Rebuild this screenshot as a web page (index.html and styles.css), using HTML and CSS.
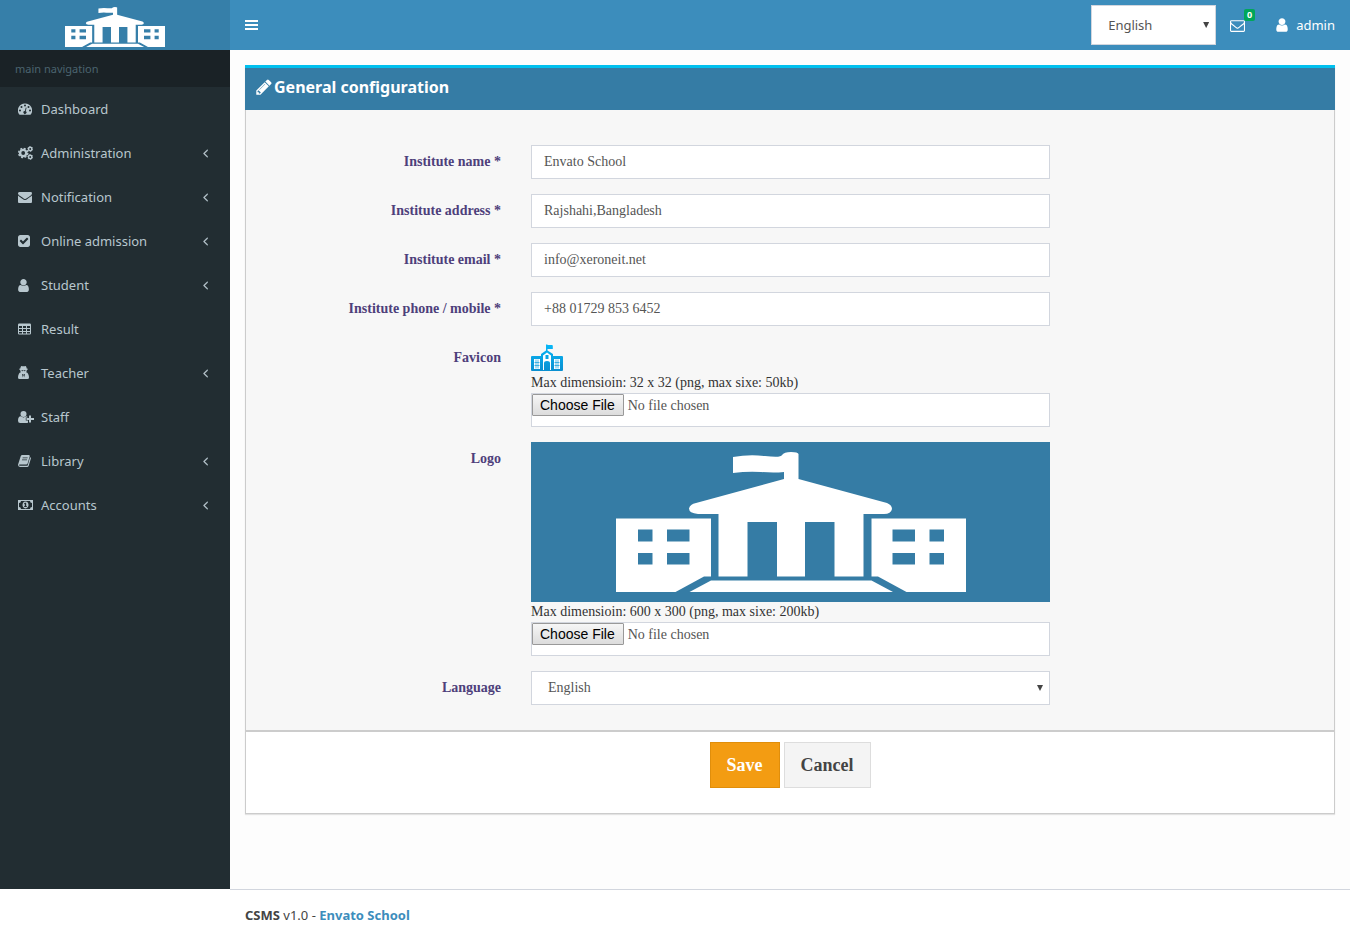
FILE: index.html
```html
<!DOCTYPE html>
<html lang="en">
<head>
<meta charset="utf-8">
<title>General configuration</title>
<link rel="stylesheet" href="styles.css">
</head>
<body>
<svg class="defs" aria-hidden="true">
  <symbol id="school" viewBox="0 0 350 140">
    <path fill-rule="evenodd" d="M117 5Q133 2 149 4T166 3Q168 0 175 0Q182 0 182.500 2V27L271 51Q276 53 276 57Q275 62 268 62H247.500V124.500H218.500V70H189V124.500H161V70H131.500V124.500H102.500V62H82Q73 61 73 56.500Q74 52 80 51L168 27V20Q158 21 145 20T117 21Z"/>
    <path fill-rule="evenodd" d="M0 66.500H95V124.500H88L59.500 140H0ZM22 77.500V89.500H36.500V77.500ZM51 77.500V89.500H73.500V77.500ZM22 101V112.500H36.500V101ZM51 101V112.500H73.500V101ZM350 66.500H255.500V124.500H262L290.500 140H350ZM276.500 77.500V89.500H299V77.500ZM313.500 77.500V89.500H328V77.500ZM276.500 101V112.500H299V101ZM313.500 101V112.500H328V101ZM73.500 140L95 128.500H255.500L277 140Z"/>
  </symbol>
  <symbol id="user" viewBox="256 0 1280 1792"><path d="M1536 1399q0 109-62.500 187t-150.500 78h-854q-88 0-150.500-78t-62.500-187q0-85 8.500-160.500t31.500-152 58.500-131 94-89 134.500-34.500q131 128 313 128t313-128q76 0 134.500 34.500t94 89 58.500 131 31.500 152 8.500 160.500zm-256-887q0 159-112.500 271.500t-271.500 112.500-271.500-112.500-112.500-271.500 112.500-271.500 271.500-112.500 271.500 112.500 112.500 271.500z"/></symbol>
  <symbol id="angle" viewBox="576 384 640 1152"><path stroke="currentColor" stroke-width="40" d="M1203 544q0 13-10 23l-393 393 393 393q10 10 10 23t-10 23l-50 50q-10 10-23 10t-23-10l-466-466q-10-10-10-23t10-23l466-466q10-10 23-10t23 10l50 50q10 10 10 23z"/></symbol>
</svg>

<div class="page">
  <a class="brand" href="#" aria-label="Home"><svg class="brand-logo"><use href="#school"/></svg></a>

  <header class="topbar">
    <button class="toggle" type="button" aria-label="Toggle navigation">
      <svg width="13" height="12" viewBox="0 0 13 12"><path d="M0 1h13v2H0zM0 5h13v2H0zM0 9h13v2H0z"/></svg>
    </button>
    <div class="tools">
      <span class="select select-top">
        <select aria-label="Site language"><option>English</option></select>
      </span>
      <a class="mail" href="#" aria-label="Messages">
        <svg width="15" height="15" viewBox="0 0 1792 1792"><path d="M1664 1504v-768q-32 36-69 66-268 206-426 338-51 43-83 67t-86.500 48.500-102.500 24.500h-2q-48 0-102.500-24.500t-86.500-48.500-83-67q-158-132-426-338-37-30-69-66v768q0 13 9.500 22.500t22.500 9.500h1472q13 0 22.500-9.500t9.500-22.500zm0-1051v-24.500l-.5-13-3-12.500-5.500-9-9-7.500-14-2.500h-1472q-13 0-22.500 9.500t-9.500 22.500q0 168 147 284 193 152 401 317 6 5 35 29.500t46 37.500 44.500 31.500 50.500 27.500 43 9h2q20 0 43-9t50.500-27.500 44.500-31.500 46-37.500 35-29.500q208-165 401-317 54-43 100.500-115.500t46.500-131.500zm128-37v1088q0 66-47 113t-113 47h-1472q-66 0-113-47t-47-113v-1088q0-66 47-113t113-47h1472q66 0 113 47t47 113z"/></svg>
        <span class="badge">0</span>
      </a>
      <a class="account" href="#"><svg width="12" height="16"><use href="#user"/></svg>admin</a>
    </div>
  </header>

  <nav class="sidebar" aria-label="Main">
    <h2 class="nav-title">main navigation</h2>
    <ul class="menu">
      <li><a href="#"><span class="icon"><svg width="14" height="14" viewBox="0 0 14 14"><path fill-rule="evenodd" d="M7 1.500a7 7 0 0 1 6 10.800q-.3.400-.8.400H1.800q-.5 0-.8-.4A7 7 0 0 1 7 1.500zM2 7.500a1 1 0 1 0 0 2 1 1 0 0 0 0-2zM3.500 4a1 1 0 1 0 0 2 1 1 0 0 0 0-2zM7 2.500a1 1 0 1 0 0 2 1 1 0 0 0 0-2zM10.500 4a1 1 0 1 0 0 2 1 1 0 0 0 0-2zM12 7.500a1 1 0 1 0 0 2 1 1 0 0 0 0-2zM7.800 5.600L6.800 9a1.500 1.500 0 1 0 .9.200l.9-3.400z"/></svg></span>Dashboard</a></li>
      <li><a href="#"><span class="icon"><svg width="15" height="14" viewBox="0 0 15 14"><circle class="line" cx="5.200" cy="7" r="3.100" stroke-width="2.400"/><circle class="line" cx="5.200" cy="7" r="4.600" stroke-width="1.400" stroke-dasharray="2 1.613"/><circle class="line" cx="12.200" cy="3" r="1.700" stroke-width="1.500"/><circle class="line" cx="12.200" cy="3" r="2.500" stroke-width=".8" stroke-dasharray="1.400 1.218"/><circle class="line" cx="12.200" cy="11" r="1.700" stroke-width="1.500"/><circle class="line" cx="12.200" cy="11" r="2.500" stroke-width=".8" stroke-dasharray="1.400 1.218"/></svg></span>Administration<svg class="angle"><use href="#angle"/></svg></a></li>
      <li><a href="#"><span class="icon"><svg width="14" height="14" viewBox="0 0 1792 1792"><path d="M1792 710v794q0 66-47 113t-113 47h-1472q-66 0-113-47t-47-113v-794q44 49 101 87 362 246 497 345 57 42 92.500 65.500t94.500 48 110 24.500h2q51 0 110-24.500t94.500-48 92.500-65.500q170-123 498-345 57-39 100-87zm0-294q0 79-49 151t-122 123q-376 261-468 325-10 7-42.500 31t-54 38.500-52 32.500-57.500 27-50 9h-2q-23 0-50-9t-57.500-27-52-32.500-54-38.500-42.500-31q-91-64-262-182.500t-205-142.500q-62-42-117-115.500t-55-136.500q0-78 41.500-130t118.500-52h1472q65 0 112.500 47t47.500 113z"/></svg></span>Notification<svg class="angle"><use href="#angle"/></svg></a></li>
      <li><a href="#"><span class="icon"><svg width="12" height="14" viewBox="128 0 1536 1792"><path d="M813 1299l614-614q19-19 19-45t-19-45l-102-102q-19-19-45-19t-45 19l-467 467-211-211q-19-19-45-19t-45 19l-102 102q-19 19-19 45t19 45l358 358q19 19 45 19t45-19zm851-883v960q0 119-84.500 203.500t-203.500 84.500h-960q-119 0-203.500-84.500t-84.500-203.500v-960q0-119 84.500-203.500t203.500-84.500h960q119 0 203.500 84.500t84.500 203.500z"/></svg></span>Online admission<svg class="angle"><use href="#angle"/></svg></a></li>
      <li><a href="#"><span class="icon"><svg width="11" height="15"><use href="#user"/></svg></span>Student<svg class="angle"><use href="#angle"/></svg></a></li>
      <li><a href="#"><span class="icon"><svg width="13" height="14" viewBox="0 0 13 14"><path fill-rule="evenodd" d="M1.200 1.500h10.600q1.200 0 1.200 1.200v8.600q0 1.200-1.200 1.200H1.200Q0 12.500 0 11.300V2.700Q0 1.500 1.200 1.500zM1 4v2h3V4zM5 4v2h3V4zM9 4v2h3V4zM1 7v2h3V7zM5 7v2h3V7zM9 7v2h3V7zM1 10v1.500h3V10zM5 10v1.500h3V10zM9 10v1.500h3V10z"/></svg></span>Result</a></li>
      <li><a href="#"><span class="icon"><svg width="11" height="14" viewBox="0 0 11 14"><path fill-rule="evenodd" d="M3.300 0q.6 0 1.100.3h2.200q.5-.3 1.100-.3.800.6 1 2.400 1.300.3 1.300.7 0 .5-1.200.8 0 1.500-.7 2.300 1.500.3 2.100 1.800.8 1.500.8 3.500Q11 13 9.500 13h-8Q0 13 0 11.500 0 9.500.8 8q.6-1.500 2.100-1.800-.7-.8-.7-2.300Q1 3.600 1 3.100q0-.4 1.300-.7Q2.500.6 3.300 0zM3.400 4.200q.1 1 .9 1t1-.6h.4q.2.600 1 .6t.9-1q-2.100.2-4.200 0zM4 7.900l.9 3.700.5-2.800-.4-.6zM7 7.900l-1 .3-.4.600.5 2.800z"/></svg></span>Teacher<svg class="angle"><use href="#angle"/></svg></a></li>
      <li><a href="#"><span class="icon"><svg width="16" height="14" viewBox="0 0 16 14"><circle cx="5.500" cy="4" r="3"/><path d="M2.800 6.300q2.700 2.200 5.400 0 .7 0 1.300.4V7.500H7.800v3H10v2q-.5.500-1.200.5H2.200Q0 13 0 10.700 0 6.500 2.800 6.300zM11 5.500h2V8h3v2h-3v2.500h-2V10H8.500V8H11z"/></svg></span>Staff</a></li>
      <li><a href="#"><span class="icon"><svg width="13" height="14" viewBox="0 0 13 14"><path fill-rule="evenodd" d="M4.200 1h6.600q1.200.2.900 1.400L9.500 9.700Q9.200 10.500 8.300 10.500H1.500q-.6.200-.3.700.2.500.8.500h7q.5 0 .7-.5l2.400-7.900q1 .3.800 1.200l-2.200 7.300q-.4 1.200-1.500 1.200H2Q0 12.700 0 10.800L2.700 2.200Q3.200 1 4.200 1zM4.700 3.500l-.2.800h5l.2-.8zM4.100 5.500l-.2.800h5l.2-.8z"/></svg></span>Library<svg class="angle"><use href="#angle"/></svg></a></li>
      <li><a href="#"><span class="icon"><svg width="15" height="14" viewBox="0 0 15 14"><path fill-rule="evenodd" d="M0 2h15v10H0zM3 3Q3 5 1 5v4q2 0 2 2h9q0-2 2-2V5q-2 0-2-2z"/><path fill-rule="evenodd" d="M7.500 3.600c4 0 4 6.800 0 6.800s-4-6.800 0-6.800zM7 4.800L5.900 5.700l.5.600.4-.3v2.200H6v.8h3v-.8h-.8V4.800z"/></svg></span>Accounts<svg class="angle"><use href="#angle"/></svg></a></li>
    </ul>
  </nav>

  <main class="content">
    <form class="box">
      <h1 class="box-title"><svg width="16" height="18" viewBox="128 0 1536 1792"><path d="M491 1536l91-91-235-235-91 91v107h128v128h107zm523-928q0-22-22-22-10 0-17 7l-542 542q-7 7-7 17 0 22 22 22 10 0 17-7l542-542q7-7 7-17zm-54-192l416 416-832 832h-416v-416zm683 96q0 53-37 90l-166 166-416-416 166-165q36-38 90-38 53 0 91 38l235 234q37 39 37 91z"/></svg>General configuration</h1>
      <div class="box-body">
        <div class="row"><label for="name">Institute name *</label><input class="field" id="name" type="text" value="Envato School"></div>
        <div class="row"><label for="address">Institute address *</label><input class="field" id="address" type="text" value="Rajshahi,Bangladesh"></div>
        <div class="row"><label for="email">Institute email *</label><input class="field" id="email" type="email" value="info@xeroneit.net"></div>
        <div class="row"><label for="phone">Institute phone / mobile *</label><input class="field" id="phone" type="tel" value="+88 01729 853 6452"></div>
        <div class="row"><label for="favicon">Favicon</label>
          <div>
            <svg class="favicon" viewBox="0 0 32 32" aria-hidden="true">
              <defs><linearGradient id="sky" x2="0" y2="1"><stop offset="0" stop-color="#08b8f8"/><stop offset="1" stop-color="#0a8fd0"/></linearGradient></defs>
              <path fill="url(#sky)" d="M15 3.500h1.500V4H21q.8 0 .8 1v3h-5.300v1.500L22 13v2h9q1 0 1 1v13q0 1-1 1H1q-1 0-1-1V16q0-1 1-1h9v-2l5-3.500z"/>
              <path fill="#fff" d="M12 14.500l4-3 4 3V29h-1v-7q0-2-3-2t-3 2v7h-1z"/>
              <path fill="#0aa5e6" d="M14.500 14h3v4h-3z"/>
              <path fill="#fff" d="M3 18h6v10H3zM23 18h6v10h-6z"/>
              <path fill="none" stroke="#0a9bdb" stroke-width=".7" d="M5 18.500v9M7 18.500v9M3.500 21.500h5M3.500 24.500h5M25 18.500v9M27 18.500v9M23.500 21.500h5M23.500 24.500h5"/>
            </svg>
            <p class="hint">Max dimensioin: 32 x 32 (png, max sixe: 50kb)</p>
            <input class="field file" id="favicon" type="file">
          </div>
        </div>
        <div class="row"><label for="logo">Logo</label>
          <div>
            <div class="logo-preview"><svg><use href="#school"/></svg></div>
            <p class="hint">Max dimensioin: 600 x 300 (png, max sixe: 200kb)</p>
            <input class="field file" id="logo" type="file">
          </div>
        </div>
        <div class="row"><label for="language">Language</label>
          <span class="select"><select id="language"><option>English</option></select></span>
        </div>
      </div>
      <div class="box-footer">
        <button class="btn save" type="submit">Save</button>
        <button class="btn cancel" type="button">Cancel</button>
      </div>
    </form>
  </main>

  <footer class="footer"><p><strong>CSMS</strong> v1.0 - <a href="#">Envato School</a></p></footer>
</div>
</body>
</html>
```

FILE: styles.css
```css
* { box-sizing: border-box; }
body {
  margin: 0;
  background: #fff;
  color: #333;
  font-family: "Noto Sans", "Open Sans", sans-serif;
  font-size: 13px;
  line-height: 20px;
}
h1, h2, p, ul { margin: 0; padding: 0; }
a { color: #3c8dbc; text-decoration: none; }
svg { display: block; fill: currentColor; flex: none; }
.defs { position: absolute; width: 0; height: 0; }

.page {
  display: grid;
  grid-template-columns: 230px 1fr;
  grid-template-rows: 50px 1fr auto;
  min-height: 100vh;
}

.brand {
  display: flex;
  justify-content: center;
  align-items: flex-end;
  padding-bottom: 3px;
  background: #367fa9;
  color: #fff;
}
.brand-logo { width: 100px; height: 40px; }

.topbar {
  display: flex;
  justify-content: space-between;
  align-items: center;
  padding-right: 15px;
  background: #3c8dbc;
  color: #fff;
}
.toggle {
  padding: 15px;
  border: 0;
  background: none;
  color: inherit;
}
.tools { display: flex; align-items: center; }
.mail { position: relative; margin-left: 14px; color: #fff; }
.badge {
  position: absolute;
  top: -9px;
  left: 14px;
  width: 11px;
  border-radius: 2px;
  background: #00a65a;
  font-size: 9px;
  font-weight: 700;
  line-height: 12px;
  text-align: center;
}
.account {
  display: flex;
  align-items: center;
  gap: 8px;
  margin-left: 31px;
  color: #fff;
}

.sidebar { background: #222d32; }
.nav-title {
  padding: 9px 15px;
  background: #1a2226;
  color: #4b646f;
  font-size: 11px;
  font-weight: 400;
  line-height: 19px;
}
.menu { list-style: none; }
.menu a {
  display: flex;
  align-items: center;
  padding: 12px 22px 12px 18px;
  color: #b8c7ce;
}
.icon { width: 23px; }
.line { fill: none; stroke: currentColor; }
.angle { width: 5px; height: 9px; margin-left: auto; }

.content { padding: 15px; background: #fdfdfd; }
.box {
  border: 1px solid #ccc;
  border-top: 0;
  background: #fff;
  box-shadow: 0 1px 1px rgba(0, 0, 0, .1);
  font-family: "Liberation Serif", serif;
  font-size: 14px;
}
.box-title {
  display: flex;
  align-items: center;
  gap: 2px;
  margin: 0 -1px;
  padding: 9px 11px 13px;
  border-top: 3px solid #00c0ef;
  background: #357ca5;
  color: #fff;
  font-family: "Noto Sans", "Open Sans", sans-serif;
  font-size: 16px;
  font-weight: 700;
}
.box-body {
  display: grid;
  gap: 15px;
  padding: 35px 10px 25px;
  background: #f7f7f7;
}
.row {
  display: grid;
  grid-template-columns: calc(25% - 22px) calc(50% - 15px);
  column-gap: 30px;
}
.row label {
  padding-top: 7px;
  color: #4e3f7b;
  font-weight: 700;
  text-align: right;
}
.field, select {
  display: block;
  width: 100%;
  height: 34px;
  border: 1px solid #d2d6de;
  border-radius: 0;
  background: #fff;
  color: #555;
  font: inherit;
}
.field { padding: 6px 12px; }
.file { padding: 0; }
.file::file-selector-button {
  height: 22px;
  margin: 0 4px 0 0;
  padding: 0 8px 0 7px;
  border: 1px solid #999;
  border-radius: 1px;
  background: linear-gradient(#f6f6f6, #dcdcdc);
  color: #000;
  font: 14px "Liberation Sans", sans-serif;
}
.select { position: relative; display: block; }
.select select { padding: 0 16px; appearance: none; }
.select::after {
  content: "";
  position: absolute;
  top: 50%;
  right: 7px;
  width: 6px;
  height: 6px;
  margin-top: -3px;
  background: #444;
  clip-path: polygon(0 0, 100% 0, 50% 100%);
  pointer-events: none;
}
.select-top { width: 125px; }
.select-top select { height: 40px; }
.favicon { width: 32px; height: 32px; }
.logo-preview {
  display: flex;
  justify-content: center;
  padding: 10px;
  background: #357ca5;
  color: #fff;
}
.logo-preview svg { width: 350px; height: 140px; }

.box-footer {
  display: flex;
  justify-content: center;
  gap: 4px;
  padding: 10px 10px 25px;
  border-top: 2px solid #ccc;
}
.btn {
  padding: 10px 16px;
  border: 1px solid #ddd;
  background: #f4f4f4;
  color: #444;
  font: 700 18px/24px "Liberation Serif", serif;
}
.save { border-color: #e08e0b; background: #f39c12; color: #fff; }

.footer {
  grid-column: 2;
  padding: 15px;
  border-top: 1px solid #d2d6de;
  color: #444;
}
.footer a { font-weight: 700; }
```
